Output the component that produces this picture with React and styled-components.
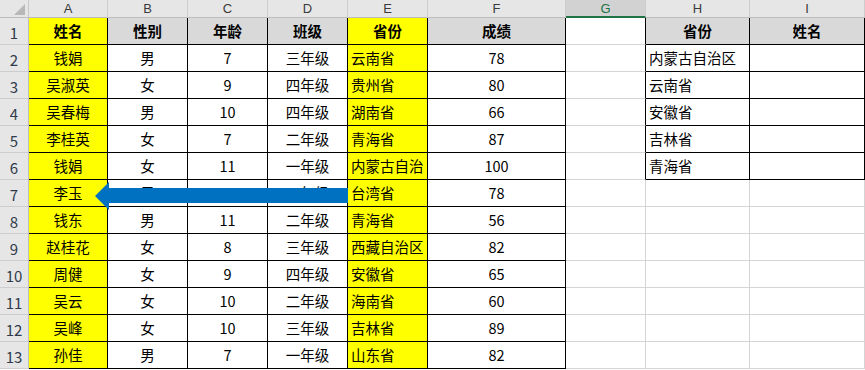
import React from "react";
import styled, { createGlobalStyle } from "styled-components";

const Global = createGlobalStyle`
  html, body { margin: 0; padding: 0; background: #ffffff; }
  body { font-family: "Noto Sans CJK SC", "Noto Sans", sans-serif; }
`;

const COLS = [29, 79, 80, 80, 80, 80, 138, 80, 104, 115];
const LETTERS = ["A", "B", "C", "D", "E", "F", "G", "H", "I"];

const Sheet = styled.div`
  position: relative;
  display: grid;
  grid-template-columns: ${COLS.map((c) => c + "px").join(" ")};
  grid-template-rows: 18px repeat(13, 27px);
  width: 865px;
  height: 370px;
  overflow: hidden;
  font-family: "Noto Sans CJK SC", "Noto Sans", sans-serif;
`;

const Corner = styled.div`
  position: relative;
  background: #e6e6e6;
  border-right: 1px solid #c8c8c8;
  border-bottom: 1px solid #bcbcbc;
  box-sizing: border-box;
  &::after {
    content: "";
    position: absolute;
    right: 3px;
    bottom: 2px;
    width: 0;
    height: 0;
    border-left: 11px solid transparent;
    border-bottom: 11px solid #b8b8b8;
  }
`;

const ColHead = styled.div`
  box-sizing: border-box;
  background: ${(p) => (p.$active ? "#d2d2d2" : "#e6e6e6")};
  border-right: 1px solid #cdcdcd;
  border-bottom: ${(p) => (p.$active ? "2px solid #217346" : "1px solid #bcbcbc")};
  color: ${(p) => (p.$active ? "#217346" : "#3a3a3a")};
  font-family: "Liberation Sans", Arial, sans-serif;
  font-size: 13px;
  line-height: 15px;
  display: flex;
  align-items: center;
  justify-content: center;
  padding-top: ${(p) => (p.$active ? "1px" : "0")};
`;

const RowHead = styled.div`
  box-sizing: border-box;
  background: #e6e6e6;
  border-right: 1px solid #bcbcbc;
  border-bottom: 1px solid #cdcdcd;
  color: #2f3b4c;
  font-size: 15px;
  display: flex;
  align-items: flex-end;
  justify-content: center;
  line-height: 20px;
  padding-bottom: 1px;
`;

const Cell = styled.div`
  box-sizing: border-box;
  background: ${(p) => p.$bg || "#ffffff"};
  border-right: 1px solid ${(p) => p.$rb};
  border-bottom: 1px solid ${(p) => p.$bb};
  font-size: 14.5px;
  font-weight: ${(p) => (p.$bold ? 700 : 400)};
  color: #000;
  display: flex;
  align-items: flex-end;
  justify-content: ${(p) => (p.$left ? "flex-start" : "center")};
  padding: 0 ${(p) => (p.$left ? "4px" : "0")} 3px ${(p) => (p.$left ? "3px" : "0")};
  line-height: 20px;
  white-space: nowrap;
  overflow: hidden;
`;

const CellText = styled.span`
  display: block;
  max-width: 100%;
  overflow: hidden;
  white-space: nowrap;
`;

const Arrow = styled.svg`
  position: absolute;
  left: 95px;
  top: 182px;
  width: 253px;
  height: 28px;
  display: block;
`;

const header = ["姓名", "性别", "年龄", "班级", "省份", "成绩"];
const data = [
  ["钱娟", "男", "7", "三年级", "云南省", "78"],
  ["吴淑英", "女", "9", "四年级", "贵州省", "80"],
  ["吴春梅", "男", "10", "四年级", "湖南省", "66"],
  ["李桂英", "女", "7", "二年级", "青海省", "87"],
  ["钱娟", "女", "11", "一年级", "内蒙古自治区", "100"],
  ["李玉", "男", "9", "二年级", "台湾省", "78"],
  ["钱东", "男", "11", "二年级", "青海省", "56"],
  ["赵桂花", "女", "8", "三年级", "西藏自治区", "82"],
  ["周健", "女", "9", "四年级", "安徽省", "65"],
  ["吴云", "女", "10", "二年级", "海南省", "60"],
  ["吴峰", "女", "10", "三年级", "吉林省", "89"],
  ["孙佳", "男", "7", "一年级", "山东省", "82"],
];
const lookup = ["内蒙古自治区", "云南省", "安徽省", "吉林省", "青海省"];

const BLACK = "#000000";
const GRID = "#d4d4d4";
const YELLOW = "#ffff00";
const GRAY = "#d9d9d9";

export default function App() {
  const cells = [];
  for (let r = 1; r <= 13; r++) {
    cells.push(<RowHead key={"rh" + r}>{r}</RowHead>);
    const vals = r === 1 ? header : data[r - 2];
    for (let c = 0; c < 6; c++) {
      const isYellowCol = c === 0 || c === 4;
      const bg = isYellowCol ? YELLOW : r === 1 ? GRAY : "#ffffff";
      cells.push(
        <Cell
          key={`c${r}-${c}`}
          $bg={bg}
          $bold={r === 1}
          $left={c === 4 && r > 1}
          $rb={BLACK}
          $bb={BLACK}
        >
          <CellText>{vals[c]}</CellText>
        </Cell>
      );
    }
    cells.push(<Cell key={`g${r}`} $rb={r <= 6 ? BLACK : GRID} $bb={GRID} />);
    const inLookup = r <= 6;
    cells.push(
      <Cell
        key={`h${r}`}
        $bg={r === 1 ? GRAY : "#ffffff"}
        $bold={r === 1}
        $left={r > 1}
        $rb={inLookup ? BLACK : GRID}
        $bb={inLookup ? BLACK : GRID}
      >
        <CellText>{r === 1 ? "省份" : lookup[r - 2] || ""}</CellText>
      </Cell>
    );
    cells.push(
      <Cell
        key={`i${r}`}
        $bg={r === 1 ? GRAY : "#ffffff"}
        $bold={r === 1}
        $rb={inLookup ? BLACK : GRID}
        $bb={inLookup ? BLACK : GRID}
      >
        <CellText>{r === 1 ? "姓名" : ""}</CellText>
      </Cell>
    );
  }

  return (
    <>
      <Global />
      <Sheet>
        <Corner />
        {LETTERS.map((l) => (
          <ColHead key={l} $active={l === "G"}>
            {l}
          </ColHead>
        ))}
        {cells}
        <Arrow viewBox="0 0 253 28">
          <polygon points="0,14 14,0 14,6 253,6 253,21 14,21 14,28" fill="#0070c0" />
        </Arrow>
      </Sheet>
    </>
  );
}
